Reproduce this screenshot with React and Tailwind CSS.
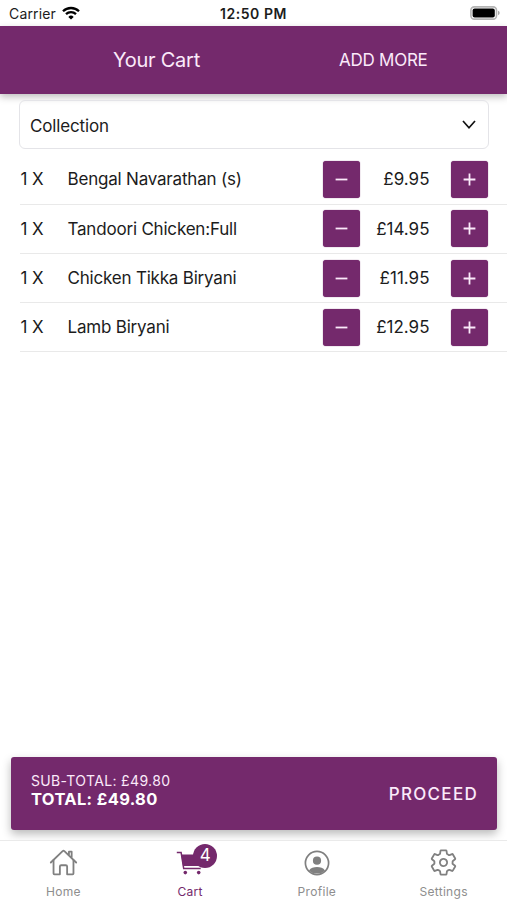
import React, { useState } from 'react';
import { IoHomeOutline, IoSettingsOutline } from 'react-icons/io5';

const INITIAL_ITEMS = [
    { id: 1, name: 'Bengal Navarathan (s)', price: 9.95, qty: 1 },
    { id: 2, name: 'Tandoori Chicken:Full', price: 14.95, qty: 1 },
    { id: 3, name: 'Chicken Tikka Biryani', price: 11.95, qty: 1 },
    { id: 4, name: 'Lamb Biryani', price: 12.95, qty: 1 },
];

const WifiIcon = () => (
    <svg width="18" height="14" viewBox="0 0 18 14" fill="none" stroke="#000" strokeWidth="2.3" className="-mt-[2px]">
        <path d="M1 5.2C5.4.9 12.6.9 17 5.2" />
        <path d="M4 8.2c2.8-2.7 7.2-2.7 10 0" />
        <path d="M9 13.6 6.3 10.9a3.9 3.9 0 0 1 5.4 0z" fill="#000" stroke="none" />
    </svg>
);

const BatteryIcon = () => (
    <svg width="30" height="14" viewBox="0 0 30 14" className="-mt-px">
        <rect x="0.9" y="0.9" width="25.6" height="12.2" rx="3.4" fill="#fff" stroke="#b4b4b4" strokeWidth="1.6" />
        <rect x="2.6" y="2.4" width="22.2" height="9.2" rx="2" fill="#000" />
        <path d="M28 4.8q1.7.6 1.7 2.2T28 9.2z" fill="#aaa" />
    </svg>
);

const CartIcon = () => (
    <svg width="28" height="26" viewBox="0 0 28 26" fill="none" stroke="currentColor">
        <path d="M.8 2.5h4.3l2.6 16h17" strokeWidth="1.5" />
        <path d="M5.2 4.6h21.4l-1.8 11.4H7z" fill="currentColor" stroke="none" />
        <circle cx="9.3" cy="22.6" r="1.8" fill="currentColor" stroke="none" />
        <circle cx="22.7" cy="22.6" r="1.8" fill="currentColor" stroke="none" />
    </svg>
);

const ProfileIcon = () => (
    <svg width="26" height="26" viewBox="0 0 26 26">
        <circle cx="13" cy="13" r="11.6" fill="none" stroke="currentColor" strokeWidth="1.7" />
        <circle cx="13" cy="10.7" r="4.1" fill="currentColor" />
        <path d="M5 20.4c1.7-2.5 4.6-3.3 8-3.3s6.3.8 8 3.3a11.6 11.6 0 0 1-16 0z" fill="currentColor" />
    </svg>
);

const StatusBar = () => (
    <div className="flex h-[26px] items-center justify-between bg-white pl-[9px] pr-[7px] pt-px">
        <div className="flex flex-1 items-center gap-[6px]">
            <span className="text-[14px] tracking-[0.15px]">Carrier</span>
            <WifiIcon />
        </div>
        <span className="-ml-[2px] text-[14px] font-semibold tracking-[0.55px]">12:50 PM</span>
        <div className="flex flex-1 justify-end">
            <BatteryIcon />
        </div>
    </div>
);

const StepButton = ({ plus, onClick }) => (
    <button onClick={onClick} className="flex h-[37px] w-[37px] shrink-0 items-center justify-center rounded-[3px] bg-[#74296c] shadow-[0_0_1px_#74296c]">
        <svg width="13" height="13" viewBox="0 0 13 13" stroke="#fbeafa" strokeWidth="1.8">
            <path d={plus ? 'M.6 6.5h11.8M6.5.6v11.8' : 'M.6 6.5h11.8'} />
        </svg>
    </button>
);

const CartRow = ({ item, onChange }) => (
    <div className="ml-5 flex h-[49.2px] items-center border-b border-[#e9e9e9] pr-[19.5px]">
        <span className="w-[47.5px] pl-[0.5px] pt-px text-[17px] tracking-[-0.1px]">{item.qty} X</span>
        <span className="flex-1 pt-px text-[17px] tracking-[-0.2px]">{item.name}</span>
        <StepButton onClick={() => onChange(item.id, -1)} />
        <span className="w-[91px] pr-[21px] pt-px text-right text-[17px]">£{item.price.toFixed(2)}</span>
        <StepButton plus onClick={() => onChange(item.id, 1)} />
    </div>
);

const Tab = ({ label, active, children }) => (
    <button className={`flex flex-1 flex-col items-center justify-start ${active ? 'text-[#74296c]' : 'text-[#808080]'}`}>
        <span className="relative flex h-[44px] items-center justify-center">{children}</span>
        <span className={`text-[12px] leading-[16px] tracking-[0.3px] ${active ? '' : 'text-[#8e8e8e]'}`}>{label}</span>
    </button>
);

const App = () => {
    const [items, setItems] = useState(INITIAL_ITEMS);

    const changeQty = (id, delta) => {
        setItems(items
            .map(item => item.id === id ? { ...item, qty: item.qty + delta } : item)
            .filter(item => item.qty > 0));
    };

    const count = items.reduce((sum, item) => sum + item.qty, 0);
    const total = items.reduce((sum, item) => sum + item.qty * item.price, 0).toFixed(2);

    return (
        <div className="flex h-screen flex-col overflow-hidden bg-white font-['Inter',sans-serif] text-[#1c1c1c]">
            <StatusBar />
            <header className="flex h-[68px] shrink-0 items-center bg-[#74296c] text-[#fbeafa] shadow-[0_3px_7px_rgba(0,0,0,0.25)]">
                <h1 className="ml-[113px] w-[226px] text-[20px] tracking-[-0.25px]">Your Cart</h1>
                <button className="pt-px text-[17px] tracking-[-0.25px]">ADD MORE</button>
            </header>

            <main className="flex-1">
                <button className="mx-[19px] mt-[6px] flex h-[49px] w-[470px] items-center justify-between rounded-[6px] border border-[#e4e4e8] pl-[10px] pr-[12px]">
                    <span className="pt-[5px] text-[17px] tracking-[-0.15px]">Collection</span>
                    <svg width="14" height="9" viewBox="0 0 14 9" fill="none" stroke="#111" strokeWidth="1.7" className="-mt-px">
                        <path d="M1 1l6 6.7L13 1" />
                    </svg>
                </button>
                <div className="mt-[6.6px]">
                    {items.map(item => <CartRow key={item.id} item={item} onChange={changeQty} />)}
                </div>
            </main>

            <section className="ml-[11px] mr-[10px] mb-[10px] flex h-[73px] shrink-0 justify-between rounded-[3px] bg-[#74296c] pl-5 pr-[19px] text-[#fbeafa] shadow-[0_4px_10px_rgba(0,0,0,0.28)]">
                <div className="pt-[14px]">
                    <p className="text-[14px] leading-[19px] tracking-[0.35px]">SUB-TOTAL: £{total}</p>
                    <p className="text-[16.5px] font-bold leading-[18px] tracking-[0.35px] text-white">TOTAL: £{total}</p>
                </div>
                <button className="pt-[2px] text-[17px] font-medium tracking-[1.3px]">PROCEED</button>
            </section>

            <nav className="relative flex h-[60px] shrink-0 border-t border-[#eaeaea] bg-white">
                <Tab label="Home"><IoHomeOutline size={29} /></Tab>
                <Tab label="Cart" active>
                    <CartIcon />
                    <span className="absolute left-[17px] top-[3px] flex h-6 w-6 items-center justify-center rounded-full bg-[#74296c] text-[17px] text-white">{count}</span>
                </Tab>
                <Tab label="Profile"><ProfileIcon /></Tab>
                <Tab label="Settings"><IoSettingsOutline size={29} /></Tab>
            </nav>
        </div>
    );
};

export default App;
